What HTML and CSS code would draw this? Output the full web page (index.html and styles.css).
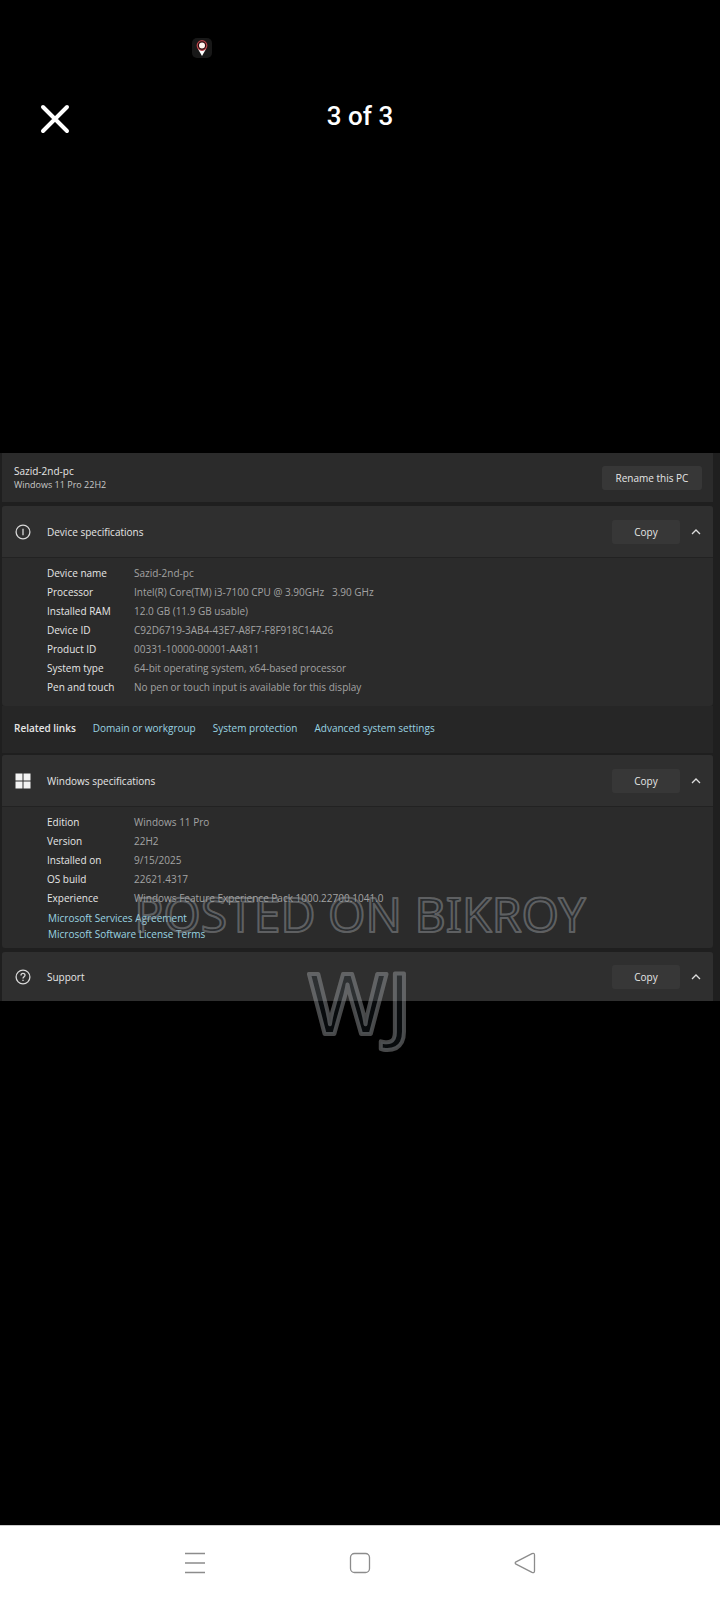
FILE: index.html
```html
<!DOCTYPE html>
<html lang="en">

<head>
    <meta charset="UTF-8">
    <meta name="viewport" content="width=device-width, initial-scale=1.0">
    <title>Photo Viewer</title>
    <link rel="stylesheet" href="styles.css">
</head>

<body>
    <!-- Status bar -->
    <div class="status-bar">
        <svg class="pin" width="20" height="20" viewBox="0 0 20 20">
            <rect width="20" height="20" rx="5" fill="#181818"/>
            <path d="M6 11 L14 11 L10 18 Z" fill="#fff"/>
            <circle cx="10" cy="7.5" r="4.8" fill="#2a0a0c" stroke="#b8444a" stroke-width="1.2"/>
            <circle cx="10" cy="7.5" r="3" fill="#fff4ee"/>
        </svg>
    </div>

    <header class="viewer-header">
        <button class="close" aria-label="Close">
            <svg width="30" height="30" viewBox="0 0 30 30" fill="none" stroke="#fff" stroke-width="4" stroke-linecap="round">
                <path d="M3 3 L27 27 M27 3 L3 27"/>
            </svg>
        </button>
        <h1>3 of 3</h1>
    </header>

    <main class="photo">
        <section class="card pc">
            <div>
                <h2>Sazid-2nd-pc</h2>
                <p class="os">Windows 11 Pro 22H2</p>
            </div>
            <button class="btn rename">Rename this PC</button>
        </section>

        <section class="card">
            <div class="card-head">
                <svg class="icon" width="16" height="16" viewBox="0 0 16 16" fill="none" stroke="#d8d8d8" stroke-width="1.3">
                    <circle cx="8" cy="8" r="6.9"/>
                    <path d="M8 4.8 V11.2"/>
                </svg>
                <h2>Device specifications</h2>
                <button class="btn">Copy</button>
                <button class="toggle" aria-label="Collapse">
                    <svg width="10" height="6" viewBox="0 0 10 6" fill="none" stroke="#ddd" stroke-width="1.3"><path d="M1 5 L5 1 L9 5"/></svg>
                </button>
            </div>
            <dl class="specs device">
                <dt>Device name</dt><dd>Sazid-2nd-pc</dd>
                <dt>Processor</dt><dd>Intel(R) Core(TM) i3-7100 CPU @ 3.90GHz &nbsp; 3.90 GHz</dd>
                <dt>Installed RAM</dt><dd>12.0 GB (11.9 GB usable)</dd>
                <dt>Device ID</dt><dd>C92D6719-3AB4-43E7-A8F7-F8F918C14A26</dd>
                <dt>Product ID</dt><dd>00331-10000-00001-AA811</dd>
                <dt>System type</dt><dd>64-bit operating system, x64-based processor</dd>
                <dt>Pen and touch</dt><dd>No pen or touch input is available for this display</dd>
            </dl>
        </section>

        <nav class="related">
            <strong>Related links</strong>
            <a href="#">Domain or workgroup</a>
            <a href="#">System protection</a>
            <a href="#">Advanced system settings</a>
        </nav>

        <section class="card">
            <div class="card-head">
                <svg class="icon" width="16" height="16" viewBox="0 0 16 16" fill="#f4f4f4">
                    <path d="M0.5 0.5h7v7h-7z M8.5 0.5h7v7h-7z M0.5 8.5h7v7h-7z M8.5 8.5h7v7h-7z"/>
                </svg>
                <h2>Windows specifications</h2>
                <button class="btn">Copy</button>
                <button class="toggle" aria-label="Collapse">
                    <svg width="10" height="6" viewBox="0 0 10 6" fill="none" stroke="#ddd" stroke-width="1.3"><path d="M1 5 L5 1 L9 5"/></svg>
                </button>
            </div>
            <dl class="specs">
                <dt>Edition</dt><dd>Windows 11 Pro</dd>
                <dt>Version</dt><dd>22H2</dd>
                <dt>Installed on</dt><dd>9/15/2025</dd>
                <dt>OS build</dt><dd>22621.4317</dd>
                <dt>Experience</dt><dd>Windows Feature Experience Pack 1000.22700.1041.0</dd>
            </dl>
            <div class="legal">
                <a href="#">Microsoft Services Agreement</a>
                <a href="#">Microsoft Software License Terms</a>
            </div>
        </section>

        <section class="card support">
            <div class="card-head">
                <svg class="icon" width="16" height="16" viewBox="0 0 16 16" fill="none" stroke="#d8d8d8" stroke-width="1.3">
                    <circle cx="8" cy="8" r="6.9"/>
                    <path d="M6 6.4 C6 3.6 10 3.7 10 6.2 C10 7.8 8 7.8 8 9.6 M8 10.7 V12"/>
                </svg>
                <h2>Support</h2>
                <button class="btn">Copy</button>
                <button class="toggle" aria-label="Collapse">
                    <svg width="10" height="6" viewBox="0 0 10 6" fill="none" stroke="#ddd" stroke-width="1.3"><path d="M1 5 L5 1 L9 5"/></svg>
                </button>
            </div>
        </section>

        <!-- Watermark over the photo -->
        <svg class="watermark" width="100%" height="190">
            <text class="posted" x="50%" y="61">POSTED ON BIKROY</text>
            <text class="brand" x="50%" y="163">WJ</text>
        </svg>
    </main>

    <!-- Android navigation -->
    <nav class="system-nav">
        <button aria-label="Recent apps">
            <svg width="24" height="24" viewBox="0 0 24 24" fill="none" stroke="#8c8c8c" stroke-width="1.6"><path d="M2 2.5H22 M2 12H22 M2 21.5H22"/></svg>
        </button>
        <button aria-label="Home">
            <svg width="24" height="24" viewBox="0 0 24 24" fill="none" stroke="#8c8c8c" stroke-width="1.3"><rect x="2.5" y="2.5" width="19" height="19" rx="4"/></svg>
        </button>
        <button aria-label="Back">
            <svg width="24" height="24" viewBox="0 0 24 24" fill="none" stroke="#8c8c8c" stroke-width="1.3" stroke-linejoin="round"><path d="M3 10.8 L19 2.6 Q21.5 1.8 21.5 4 V20 Q21.5 22.2 19 21.4 L3 13.2 Q1.4 12 3 10.8 Z"/></svg>
        </button>
    </nav>
</body>

</html>
```
FILE: styles.css
```css
* {
    margin: 0;
    padding: 0;
    box-sizing: border-box;
}

body {
    background-color: #000;
    color: #e6e6e6;
    display: flex;
    flex-direction: column;
    min-height: 100vh;
    font-family: "Open Sans", "Noto Sans", sans-serif;
    font-size: 10px;
    font-weight: 500;
}

button {
    border: none;
    background: none;
    color: inherit;
    font: inherit;
    cursor: pointer;
}

a {
    color: #9ad4e2;
    text-decoration: none;
}

/* Top of the viewer */
.status-bar {
    height: 80px;
    padding: 38px 0 0 192px;
}

.pin {
    display: block;
}

.viewer-header {
    display: grid;
    grid-template-columns: 80px 1fr 80px;
    align-items: start;
    height: 73px;
    padding-top: 21px;
}

.viewer-header h1 {
    color: #fff;
    font-family: Roboto, sans-serif;
    font-size: 26px;
    font-weight: 500;
    line-height: 30px;
    text-align: center;
}

.close {
    height: 36px;
    padding-left: 30px;
}

.close svg {
    display: block;
    margin: 0 auto;
}

/* Photo */
.photo {
    position: relative;
    display: flex;
    flex-direction: column;
    gap: 4px;
    margin: 300px 0 auto;
    padding: 0 7px 0 2px;
    background-color: #1f1f1f;
}

.card {
    background-color: #2b2b2b;
    border-radius: 3px;
}

.card h2 {
    font-size: 10px;
    font-weight: 500;
    line-height: 14px;
}

.pc {
    display: flex;
    justify-content: space-between;
    align-items: center;
    height: 49px;
    padding: 0 11px 0 12px;
    border-radius: 0;
}

.os {
    color: #c8c8c8;
    font-size: 9px;
    font-weight: 400;
    line-height: 13px;
}

.btn {
    width: 68px;
    height: 24px;
    border-radius: 3px;
    background-color: #373737;
}

.rename {
    width: 100px;
}

.card-head {
    display: flex;
    align-items: center;
    height: 52px;
    padding: 0 11px 0 13px;
    border-bottom: 1px solid #222;
    border-radius: 3px 3px 0 0;
    background-color: #2f2f2f;
}

.card-head h2 {
    flex: 1;
    padding-left: 16px;
}

.toggle {
    width: 12px;
    margin-left: 10px;
}

.toggle svg {
    display: block;
    margin: 0 auto;
}

.specs {
    display: grid;
    grid-template-columns: 87px 1fr;
    padding: 6px 0 0 45px;
    line-height: 19px;
}

.specs dd {
    color: #a3a3a3;
}

.device {
    padding-bottom: 9px;
}

.related {
    display: flex;
    align-items: center;
    gap: 17px;
    height: 47px;
    margin: -4px 0 -2px;
    padding: 0 0 4px 12px;
    background-color: #262626;
}

.related strong {
    font-weight: 600;
}

.legal {
    display: flex;
    flex-direction: column;
    align-items: flex-start;
    padding: 2px 0 6px 46px;
    line-height: 16px;
}

.support .card-head {
    height: 49px;
    border: none;
}

.watermark {
    position: absolute;
    left: 0;
    bottom: -60px;
    pointer-events: none;
}

.watermark text {
    font-family: "Noto Sans", sans-serif;
    text-anchor: middle;
    stroke: rgba(170, 172, 175, 0.42);
    stroke-linejoin: round;
    fill: rgba(40, 55, 65, 0.2);
}

.posted {
    font-size: 48px;
    font-weight: 400;
    stroke-width: 2px;
}

.brand {
    font-size: 84px;
    font-weight: 500;
    stroke-width: 4px;
}

/* Bottom bar */
.system-nav {
    display: flex;
    justify-content: center;
    gap: 141px;
    height: 75px;
    padding-top: 25px;
    border-top: 1px solid #ccc;
    background-color: #fff;
}

.system-nav button {
    width: 24px;
    height: 24px;
}
```
